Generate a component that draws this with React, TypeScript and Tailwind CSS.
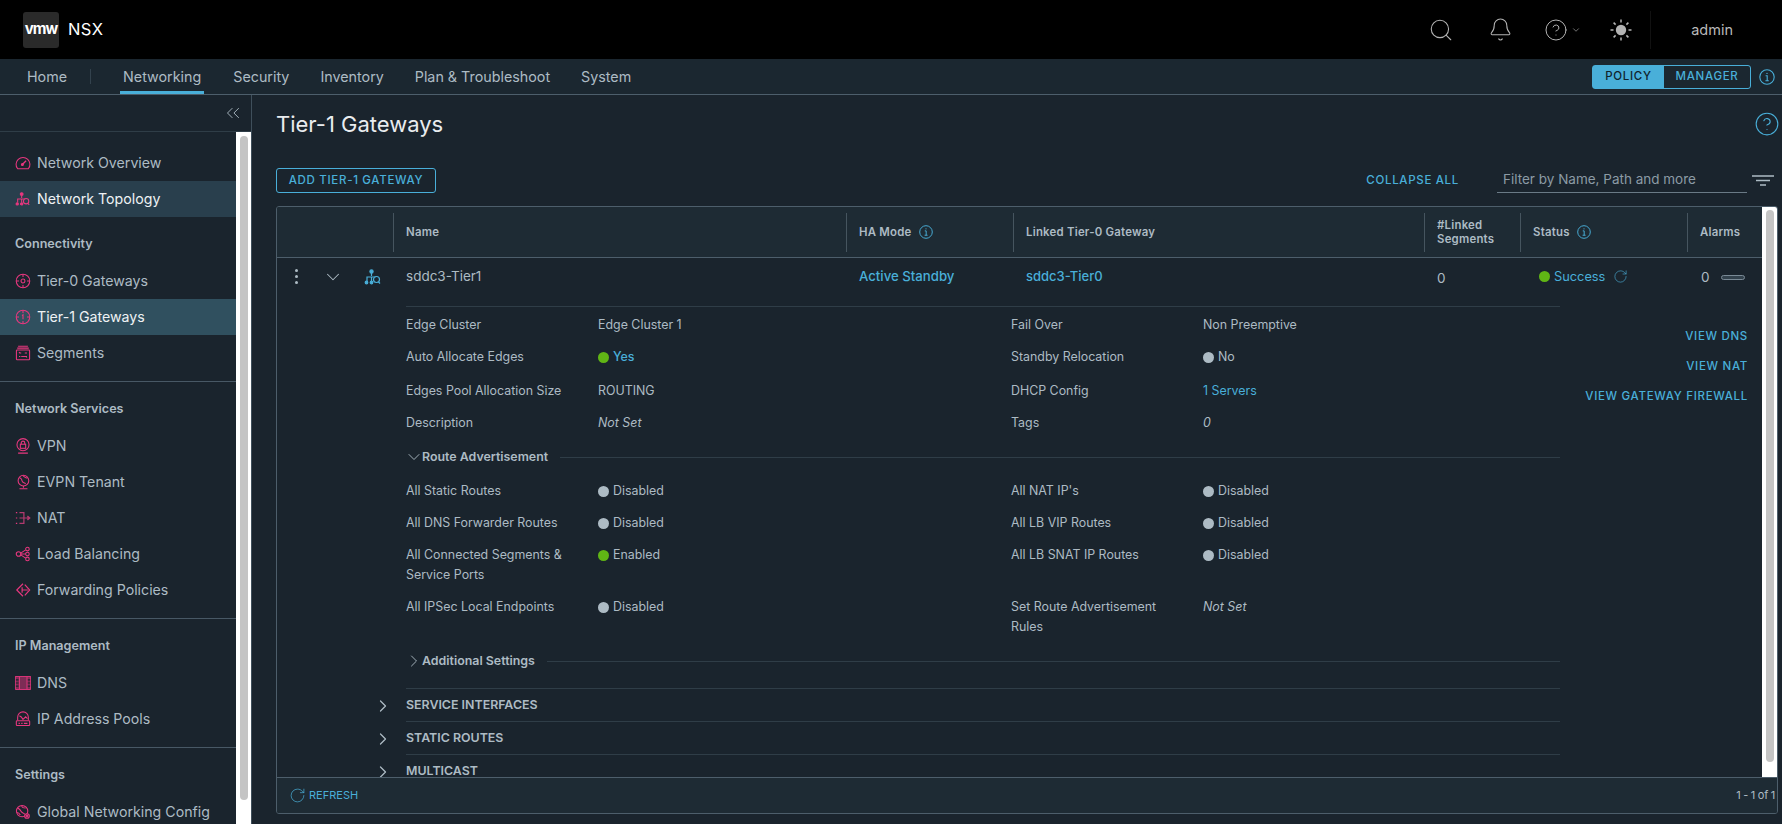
import type { ReactNode } from "react";
import { ChevronDown, ChevronRight, ChevronsLeft, CircleHelp, Search, Bell, RotateCw } from "lucide-react";

const PINK = "#e8377f";

function Gauge() {
  return (
    <svg width="18" height="18" viewBox="0 0 18 18" fill="none" stroke={PINK} strokeWidth="1.2">
      <path d="M3 15.5a7.8 7.8 0 1 1 12 0z" />
      <path d="M8.5 10.5 12.5 6.5" strokeWidth="1.5" />
      <circle cx="8.3" cy="10.8" r="1.1" fill={PINK} />
    </svg>
  );
}

function Topology({ color = PINK }: { color?: string }) {
  return (
    <svg width="18" height="18" viewBox="0 0 18 18" fill="none" stroke={color} strokeWidth="1.2">
      <circle cx="7.5" cy="3.5" r="1.6" fill={color} />
      <path d="M7.5 5v3M3 13V9h8.5M7.5 9v4" />
      <circle cx="2.5" cy="14.5" r="1.3" fill={color} />
      <circle cx="7.5" cy="14.5" r="1.3" fill={color} />
      <circle cx="12.5" cy="11.5" r="3" />
      <path d="M14.5 14l1.5 1.5" />
    </svg>
  );
}

function GatewayIcon({ zero }: { zero?: boolean }) {
  return (
    <svg width="18" height="18" viewBox="0 0 18 18" fill="none" stroke={PINK} strokeWidth="1.2">
      <circle cx="9" cy="9" r="7.6" />
      <path d="M9 1.5v3M9 13.5v3M1.5 9h3M13.5 9h3" />
      {zero ? <circle cx="9" cy="9" r="2.2" /> : <path d="M8 7.5 9 6.5V11.5" />}
    </svg>
  );
}

function SegmentsIcon() {
  return (
    <svg width="18" height="18" viewBox="0 0 18 18" fill="none" stroke={PINK} strokeWidth="1.2">
      <path d="M3.5 1.5h11M2.5 3.5h13" />
      <rect x="1.6" y="5.6" width="14.8" height="11" rx="0.8" />
      <path d="M7 9H4.5M4.5 9l1-1M11 9h2.5M7 13h6.5M13.5 13l-1 1M4.5 13H6" />
    </svg>
  );
}

function VpnIcon() {
  return (
    <svg width="18" height="18" viewBox="0 0 18 18" fill="none" stroke={PINK} strokeWidth="1.2">
      <circle cx="9" cy="7.5" r="6.8" />
      <rect x="6" y="7" width="6" height="4.6" />
      <path d="M7 7V5.5a2 2 0 0 1 4 0V7M3.5 17h11" />
    </svg>
  );
}

function EvpnIcon() {
  return (
    <svg width="18" height="18" viewBox="0 0 18 18" fill="none" stroke={PINK} strokeWidth="1.2">
      <circle cx="9.5" cy="7.5" r="6" />
      <path d="M5 4c2 1 3 2 3 4s3 1.5 4 3M9 1.8c1 2 3 2 5 3M9.5 13.5v2M5 16.5h9" />
    </svg>
  );
}

function NatIcon() {
  return (
    <svg width="18" height="18" viewBox="0 0 18 18" fill="none" stroke="#b23a6f" strokeWidth="1.4">
      <path d="M1 3h1.5M1 9h1.5M1 15h1.5" stroke={PINK} />
      <path d="M5 3h5v12H5M5 9h11" />
      <path d="M14 6.8 16.6 9 14 11.2" fill="#b23a6f" />
    </svg>
  );
}

function LoadIcon() {
  return (
    <svg width="18" height="18" viewBox="0 0 18 18" fill="none" stroke={PINK} strokeWidth="1.2">
      <circle cx="4" cy="9" r="2.6" />
      <circle cx="14" cy="3.5" r="2" />
      <circle cx="14" cy="9" r="2" />
      <circle cx="14" cy="14.5" r="2" />
      <path d="M6.4 8 12 4.4M6.6 9H12M6.4 10 12 13.6" />
    </svg>
  );
}

function ForwardIcon() {
  return (
    <svg width="18" height="18" viewBox="0 0 18 18" fill="none" stroke={PINK} strokeWidth="1.3">
      <path d="M9 2 2 9l7 7M11 3l5.5 6-5.5 6" />
      <path d="M8 6v6M8 9h6.5" />
    </svg>
  );
}

function DnsIcon() {
  return (
    <svg width="18" height="16" viewBox="0 0 18 16" fill="none">
      <rect x="0.7" y="0.7" width="16.6" height="14.6" fill="#7d2c55" stroke={PINK} strokeWidth="1" />
      <path d="M1 4.5h3M1 8h3M1 11.5h3M14 4.5h3M14 8h3M14 11.5h3" stroke="#1a242d" strokeWidth="1.4" />
      <path d="M5 1v14M13.5 1v14" stroke={PINK} strokeWidth="1" />
    </svg>
  );
}

function PoolsIcon() {
  return (
    <svg width="18" height="18" viewBox="0 0 18 18" fill="none" stroke={PINK} strokeWidth="1.2">
      <path d="M3 10.5V7a6 6 0 0 1 12 0v3.5" />
      <path d="M5 5.5c2 .5 3 2 4 4l3-3 2 2" />
      <rect x="1.5" y="11" width="15" height="5.4" rx="0.8" />
      <path d="M4 13.8h1.5M7 13.8h1.5M10 13.8h4" strokeWidth="1.4" />
    </svg>
  );
}

function GlobalIcon() {
  return (
    <svg width="18" height="18" viewBox="0 0 18 18" fill="none" stroke={PINK} strokeWidth="1.2">
      <circle cx="8" cy="8" r="6.4" />
      <path d="M3 4.5c2 1 3 2 4 4s3 1 4 3M8 1.6c-1 2 1 3 4 3M2 9.5c2 0 3 1 4 3" />
      <circle cx="13.5" cy="13.5" r="2.6" fill="#1a242d" />
      <circle cx="13.5" cy="13.5" r="1" />
    </svg>
  );
}

function InfoCircle({ size = 14 }: { size?: number }) {
  return (
    <svg width={size} height={size} viewBox="0 0 16 16" fill="none" stroke="#49afd9" strokeWidth="1.1">
      <circle cx="8" cy="8" r="7.2" />
      <circle cx="8" cy="4.4" r="0.7" fill="#49afd9" stroke="none" />
      <path d="M6.6 6.7H8.2V11.6M6.4 11.7h3.4" />
    </svg>
  );
}

function SunIcon() {
  return (
    <svg width="24" height="24" viewBox="0 0 24 24" fill="none" stroke="#b3b3b3" strokeWidth="1.5">
      <circle cx="12" cy="12" r="5.2" fill="#b3b3b3" stroke="none" />
      <path d="M12 1.5v3M12 19.5v3M1.5 12h3M19.5 12h3M4.6 4.6l2 2M17.4 17.4l2 2M19.4 4.6l-2 2M6.6 17.4l-2 2" />
    </svg>
  );
}

function FilterLines() {
  return (
    <svg width="22" height="11" viewBox="0 0 22 11" fill="none" stroke="#adbbc4" strokeWidth="1.5">
      <path d="M0 1h22M4 5.5h14M8 10h6" />
    </svg>
  );
}

function NavItem({ icon, label, tone }: { icon: ReactNode; label: string; tone?: "hover" | "active" }) {
  return (
    <div
      className={`flex h-9 items-center gap-[6px] pl-[15px] text-[14.2px] ${
        tone === "active"
          ? "bg-[#30505f] text-[#eef2f4]"
          : tone === "hover"
            ? "bg-[#293f4d] text-[#eef2f4]"
            : "text-[#adbbc4]"
      }`}
    >
      <span className="flex w-4 shrink-0 items-center justify-center">{icon}</span>
      <span className="whitespace-nowrap">{label}</span>
    </div>
  );
}

function NavHeading({ children }: { children: ReactNode }) {
  return (
    <div className="flex h-[46px] items-center pb-px pl-[15px] pt-[9px] text-[12.6px] font-semibold text-[#adbbc4]">
      {children}
    </div>
  );
}

function Sidebar() {
  return (
    <aside className="flex w-[252px] shrink-0 flex-col border-r border-[#3f4f5b] bg-[#1a242d]">
      <div className="flex h-[37px] shrink-0 items-center justify-end border-b border-[#2f3d47] pr-[7px]">
        <ChevronsLeft size={22} strokeWidth={1} className="text-[#adbbc4]" />
      </div>
      <div className="flex min-h-0 flex-1">
        <div className="min-w-0 flex-1 overflow-hidden pt-[13px]">
          <NavItem icon={<Gauge />} label="Network Overview" />
          <NavItem icon={<Topology />} label="Network Topology" tone="hover" />
          <NavHeading>Connectivity</NavHeading>
          <NavItem icon={<GatewayIcon zero />} label="Tier-0 Gateways" />
          <NavItem icon={<GatewayIcon />} label="Tier-1 Gateways" tone="active" />
          <NavItem icon={<SegmentsIcon />} label="Segments" />
          <div className="mt-[10px] border-t border-[#485865]" />
          <NavHeading>Network Services</NavHeading>
          <NavItem icon={<VpnIcon />} label="VPN" />
          <NavItem icon={<EvpnIcon />} label="EVPN Tenant" />
          <NavItem icon={<NatIcon />} label="NAT" />
          <NavItem icon={<LoadIcon />} label="Load Balancing" />
          <NavItem icon={<ForwardIcon />} label="Forwarding Policies" />
          <div className="mt-[10px] border-t border-[#485865]" />
          <NavHeading>IP Management</NavHeading>
          <NavItem icon={<DnsIcon />} label="DNS" />
          <NavItem icon={<PoolsIcon />} label="IP Address Pools" />
          <div className="mt-[10px] border-t border-[#485865]" />
          <NavHeading>Settings</NavHeading>
          <NavItem icon={<GlobalIcon />} label="Global Networking Config" />
        </div>
        <div className="w-[15px] shrink-0 bg-white px-[3px] pb-[24px] pt-[4px]">
          <div className="ml-px h-full w-[8px] rounded-full bg-[#c4c4c4]" />
        </div>
      </div>
    </aside>
  );
}

function TopBars() {
  return (
    <>
      <header className="flex h-[59px] shrink-0 items-center bg-black pl-[23px] pr-[49px]">
        <div className="flex h-9 w-9 items-center justify-center rounded-[3px] bg-[#2a2a2a] text-[15px] font-bold tracking-[-0.06em] text-white">
          vmw
        </div>
        <span className="ml-[9px] text-[16.5px] font-normal tracking-wide text-white">NSX</span>
        <div className="ml-auto flex items-center text-[#b3b3b3]">
          <Search size={26} strokeWidth={1} />
          <Bell size={25} strokeWidth={1} className="ml-[34px]" />
          <CircleHelp size={24} strokeWidth={1} className="ml-[31px]" />
          <ChevronDown size={10} strokeWidth={1.5} className="ml-[3px]" />
          <span className="ml-[28px] flex">
            <SunIcon />
          </span>
          <span className="ml-[17px] h-[38px] border-l border-[#111111]" />
          <span className="ml-[40px] text-[14.5px] text-[#b9b9b9]">admin</span>
        </div>
      </header>
      <nav className="flex h-[36px] shrink-0 items-stretch border-b border-[#4d5e6b] bg-[#1b2730] text-[14.3px] text-[#adbbc4]">
        <span className="ml-[27px] flex items-center">Home</span>
        <span className="my-[10px] ml-[23px] border-l border-[#33424d]" />
        <span className="ml-[29px] flex items-center border-b-[3px] border-[#49afd9] px-[3px] pt-[3px]">Networking</span>
        <span className="ml-[29px] flex items-center">Security</span>
        <span className="ml-[31px] flex items-center">Inventory</span>
        <span className="ml-[31px] flex items-center">Plan &amp; Troubleshoot</span>
        <span className="ml-[31px] flex items-center">System</span>
        <div className="ml-auto flex items-center pr-[7px]">
          <div className="flex h-[24px] w-[159px] rounded-[3px] border border-[#49afd9] text-[11.5px] font-medium tracking-[0.06em]">
            <span className="flex w-[71px] items-center justify-center bg-[#49afd9] text-[#10232c]">POLICY</span>
            <span className="flex flex-1 items-center justify-center text-[#49afd9]">MANAGER</span>
          </div>
          <span className="ml-[8px] flex">
            <InfoCircle size={16} />
          </span>
        </div>
      </nav>
    </>
  );
}

const COLS = "grid-cols-[116px_453px_167px_411px_96px_167px_1fr]";

function HeaderCell({ children }: { children: ReactNode }) {
  return (
    <div className="flex h-[39px] items-center gap-[7px] border-l border-[#46555f] pl-[12px] text-[11.4px] font-semibold leading-[14px] tracking-[0.02em] text-[#adbbc4]">
      {children}
    </div>
  );
}

function StatusValue({ on, children }: { on?: boolean; children: ReactNode }) {
  return (
    <span className="flex items-center gap-[4px]">
      <span className={`h-[11px] w-[11px] rounded-full ${on ? "bg-[#60b515]" : "bg-[#adbbc4]"}`} />
      {children}
    </span>
  );
}

function Detail({ label, value }: { label: ReactNode; value: ReactNode }) {
  return (
    <div className="flex">
      <div className="w-[192px] shrink-0 pr-[12px]">{label}</div>
      <div className="flex-1">{value}</div>
    </div>
  );
}

function DetailRow({ left, right, className = "" }: { left: ReactNode; right: ReactNode; className?: string }) {
  return (
    <div className={`grid min-h-[32px] grid-cols-[605px_1fr] py-[6px] leading-[20px] ${className}`}>
      {left}
      {right}
    </div>
  );
}

function SubHeading({ open, label }: { open?: boolean; label: string }) {
  return (
    <div className="flex h-[36px] items-center font-semibold text-[#adbbc4]">
      {open ? (
        <ChevronDown size={20} strokeWidth={1.1} className="-ml-[2px] -mr-[2px] shrink-0" />
      ) : (
        <ChevronRight size={20} strokeWidth={1.1} className="-ml-[2px] -mr-[2px] shrink-0" />
      )}
      <span>{label}</span>
      <span className="ml-[12px] flex-1 border-t border-[#2f3d47]" />
    </div>
  );
}

function CollapsedRow({ label }: { label: string }) {
  return (
    <div className="relative flex h-[33px] shrink-0 items-center border-t border-[#2f3d47] font-semibold text-[#adbbc4]">
      <ChevronRight size={20} strokeWidth={1.5} className="absolute -left-[33px] top-[7px]" />
      {label}
    </div>
  );
}

function Gateways() {
  return (
    <div className="flex min-h-0 flex-1 flex-col overflow-hidden rounded-[3px] border border-[#4d5e6b]">
      <div className="flex min-h-0 flex-1">
        <div className="flex min-w-0 flex-1 flex-col">
          <div className={`grid h-[51px] shrink-0 items-center border-b border-[#4d5e6b] bg-[#1e2b34] ${COLS}`}>
            <div />
            <HeaderCell>Name</HeaderCell>
            <HeaderCell>
              HA Mode <InfoCircle />
            </HeaderCell>
            <HeaderCell>Linked Tier-0 Gateway</HeaderCell>
            <HeaderCell>
              <span>
                #Linked
                <br />
                Segments
              </span>
            </HeaderCell>
            <HeaderCell>
              Status <InfoCircle />
            </HeaderCell>
            <HeaderCell>Alarms</HeaderCell>
          </div>

          <div className="min-h-0 flex-1 overflow-hidden bg-[#1a242d] text-[12.4px] text-[#adbbc4]">
            <div className={`grid h-[48px] ${COLS}`}>
              <div className="flex h-[37px] items-center text-[#adbbc4]">
                <span className="ml-[18px] flex flex-col gap-[3px]">
                  <span className="h-[3px] w-[3px] rounded-full bg-[#adbbc4]" />
                  <span className="h-[3px] w-[3px] rounded-full bg-[#adbbc4]" />
                  <span className="h-[3px] w-[3px] rounded-full bg-[#adbbc4]" />
                </span>
                <ChevronDown size={22} strokeWidth={1.1} className="ml-[24px] shrink-0" />
                <span className="ml-[20px] flex">
                  <Topology color="#49afd9" />
                </span>
              </div>
              <div className="flex h-[37px] items-center pl-[13px] text-[13.5px]">sddc3-Tier1</div>
              <div className="flex h-[37px] items-center pl-[13px] text-[13.2px] font-medium text-[#49afd9]">Active Standby</div>
              <div className="flex h-[37px] items-center pl-[13px] text-[13px] font-medium text-[#49afd9]">sddc3-Tier0</div>
              <div className="flex h-[37px] items-center pl-[13px] pt-[4px] text-[13.5px]">0</div>
              <div className="flex h-[37px] items-center pl-[13px] text-[12.8px] text-[#49afd9]">
                <span className="ml-[6px]">
                  <StatusValue on>Success</StatusValue>
                </span>
                <RotateCw size={15} strokeWidth={1} className="ml-[8px]" />
              </div>
              <div className="flex h-[37px] items-center pl-[14px] pt-[2px] text-[13.5px]">
                0
                <span className="ml-[11px] h-[5px] w-[24px] rounded-full border border-[#7a8a96] bg-[#33424d]" />
              </div>
            </div>

            <div className="flex">
              <div className="ml-[129px] w-[1154px] shrink-0">
                <div className="border-t border-[#2f3d47] pt-[2px]">
                  <DetailRow
                    left={<Detail label="Edge Cluster" value="Edge Cluster 1" />}
                    right={<Detail label="Fail Over" value="Non Preemptive" />}
                  />
                  <DetailRow
                    left={
                      <Detail
                        label="Auto Allocate Edges"
                        value={
                          <span className="font-medium text-[#49afd9]">
                            <StatusValue on>Yes</StatusValue>
                          </span>
                        }
                      />
                    }
                    right={<Detail label="Standby Relocation" value={<StatusValue>No</StatusValue>} />}
                  />
                  <DetailRow
                    className="mt-[2px]"
                    left={<Detail label="Edges Pool Allocation Size" value="ROUTING" />}
                    right={<Detail label="DHCP Config" value={<span className="text-[#49afd9]">1 Servers</span>} />}
                  />
                  <DetailRow
                    left={<Detail label="Description" value={<em>Not Set</em>} />}
                    right={<Detail label="Tags" value={<em>0</em>} />}
                  />
                </div>

                <SubHeading open label="Route Advertisement" />
                <DetailRow
                  left={<Detail label="All Static Routes" value={<StatusValue>Disabled</StatusValue>} />}
                  right={<Detail label="All NAT IP's" value={<StatusValue>Disabled</StatusValue>} />}
                />
                <DetailRow
                  left={<Detail label="All DNS Forwarder Routes" value={<StatusValue>Disabled</StatusValue>} />}
                  right={<Detail label="All LB VIP Routes" value={<StatusValue>Disabled</StatusValue>} />}
                />
                <DetailRow
                  left={
                    <Detail
                      label={
                        <>
                          All Connected Segments &amp;
                          <br />
                          Service Ports
                        </>
                      }
                      value={<StatusValue on>Enabled</StatusValue>}
                    />
                  }
                  right={<Detail label="All LB SNAT IP Routes" value={<StatusValue>Disabled</StatusValue>} />}
                />
                <DetailRow
                  left={<Detail label="All IPSec Local Endpoints" value={<StatusValue>Disabled</StatusValue>} />}
                  right={
                    <Detail
                      label={
                        <>
                          Set Route Advertisement
                          <br />
                          Rules
                        </>
                      }
                      value={<em>Not Set</em>}
                    />
                  }
                />
                <SubHeading label="Additional Settings" />
                <div className="mt-[9px]">
                  <CollapsedRow label="SERVICE INTERFACES" />
                  <CollapsedRow label="STATIC ROUTES" />
                  <CollapsedRow label="MULTICAST" />
                </div>
              </div>
              <div className="flex flex-1 flex-col items-end pr-[14px] pt-[16px] text-[11.5px] font-medium tracking-[0.06em] text-[#49afd9]">
                <span className="flex h-[30px] items-center whitespace-nowrap">VIEW DNS</span>
                <span className="flex h-[30px] items-center whitespace-nowrap">VIEW NAT</span>
                <span className="flex h-[30px] items-center whitespace-nowrap">VIEW GATEWAY FIREWALL</span>
              </div>
            </div>
          </div>
        </div>
        <div className="w-[15px] shrink-0 bg-white px-[4px] pb-[15px] pt-[3px]">
          <div className="h-full w-[8px] rounded-full bg-[#c4c4c4]" />
        </div>
      </div>
      <footer className="flex h-[36px] shrink-0 items-center border-t border-[#4d5e6b] bg-[#1e2b34] pl-[12px] pr-[2px]">
        <RotateCw size={17} strokeWidth={1} className="text-[#49afd9]" />
        <span className="ml-[3px] text-[11px] text-[#49afd9]">REFRESH</span>
        <span className="ml-auto text-[11px] tracking-tight text-[#adbbc4]">1 - 1 of 1</span>
      </footer>
    </div>
  );
}

export default function App() {
  return (
    <div className="flex h-screen w-full flex-col overflow-hidden bg-[#1a242d] font-['Inter','Liberation_Sans',sans-serif]">
      <TopBars />
      <div className="flex min-h-0 flex-1">
        <Sidebar />
        <main className="flex min-w-0 flex-1 flex-col pb-[10px] pl-[24px] pr-[4px]">
          <div className="mt-[14px] flex h-[30px] shrink-0 items-center justify-between">
            <h1 className="text-[22px] font-normal text-[#e9ecef]">Tier-1 Gateways</h1>
            <CircleHelp size={26} strokeWidth={1} className="-mr-[2px] text-[#49afd9]" />
          </div>
          <div className="mb-[13px] mt-[29px] flex h-[25px] shrink-0 items-center">
            <button className="flex h-[25px] w-[160px] items-center justify-center rounded-[3px] border border-[#49afd9] text-[11.5px] font-medium tracking-[0.06em] text-[#49afd9]">
              ADD TIER-1 GATEWAY
            </button>
            <span className="ml-auto text-[11.5px] font-medium tracking-[0.06em] text-[#49afd9]">COLLAPSE ALL</span>
            <div className="ml-[38px] flex h-[25px] w-[250px] items-center border-b border-[#6a7a86] pb-[2px] pl-[6px] text-[13.5px] text-[#8c9ba5]">
              Filter by Name, Path and more
            </div>
            <span className="ml-[5px] mr-[4px] flex">
              <FilterLines />
            </span>
          </div>
          <Gateways />
        </main>
      </div>
    </div>
  );
}
